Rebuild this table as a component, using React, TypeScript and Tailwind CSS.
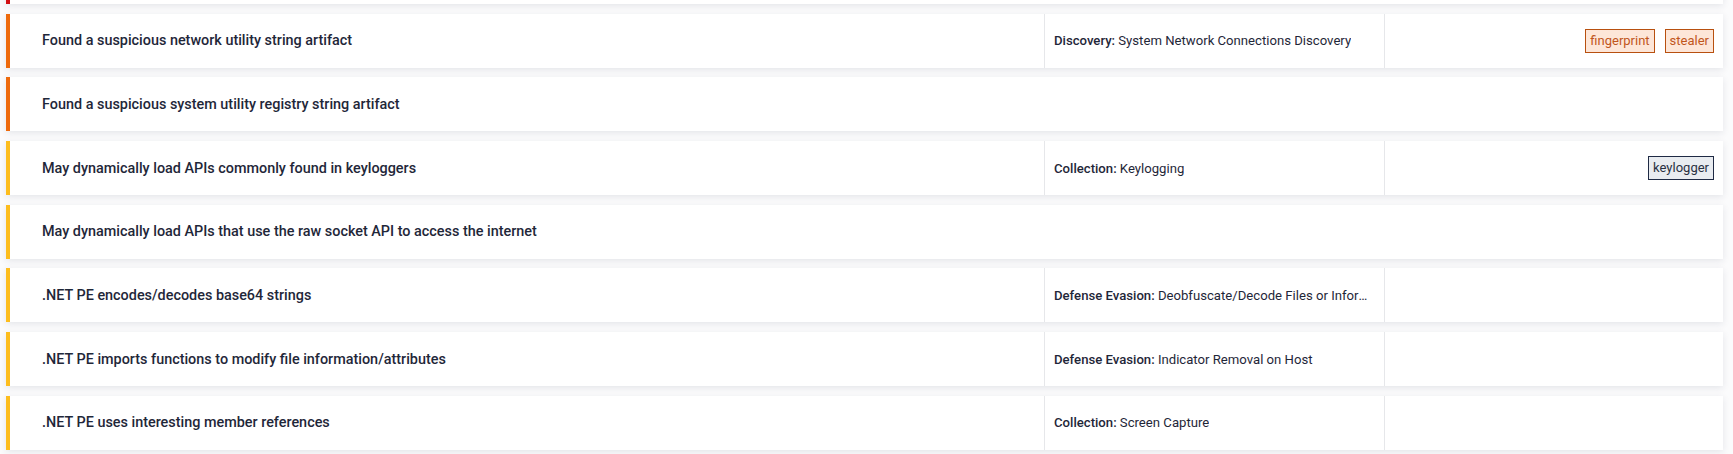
import React from "react";

type Row = {
  title: string;
  color: string;
  tactic?: { label: string; value: string };
  tags?: { text: string; kind: "orange" | "dark" }[];
  cols: boolean;
};

const rows: Row[] = [
  {
    title: "Found a suspicious network utility string artifact",
    color: "bg-[#ee6a0c]",
    tactic: { label: "Discovery:", value: "System Network Connections Discovery" },
    tags: [
      { text: "fingerprint", kind: "orange" },
      { text: "stealer", kind: "orange" },
    ],
    cols: true,
  },
  {
    title: "Found a suspicious system utility registry string artifact",
    color: "bg-[#ee6a0c]",
    cols: false,
  },
  {
    title: "May dynamically load APIs commonly found in keyloggers",
    color: "bg-[#fdbd1d]",
    tactic: { label: "Collection:", value: "Keylogging" },
    tags: [{ text: "keylogger", kind: "dark" }],
    cols: true,
  },
  {
    title: "May dynamically load APIs that use the raw socket API to access the internet",
    color: "bg-[#fdbd1d]",
    cols: false,
  },
  {
    title: ".NET PE encodes/decodes base64 strings",
    color: "bg-[#fdbd1d]",
    tactic: { label: "Defense Evasion:", value: "Deobfuscate/Decode Files or Information" },
    cols: true,
  },
  {
    title: ".NET PE imports functions to modify file information/attributes",
    color: "bg-[#fdbd1d]",
    tactic: { label: "Defense Evasion:", value: "Indicator Removal on Host" },
    cols: true,
  },
  {
    title: ".NET PE uses interesting member references",
    color: "bg-[#fdbd1d]",
    tactic: { label: "Collection:", value: "Screen Capture" },
    cols: true,
  },
];

function Tag({ text, kind }: { text: string; kind: "orange" | "dark" }) {
  const cls =
    kind === "orange"
      ? "border-[#b8500f] bg-[#fde6d8] text-[#c1561c]"
      : "border-[#1f2a44] bg-[#e9ecf0] text-[#2a3142]";
  return (
    <span className={`ml-[10px] inline-block border px-[4px] text-[13px] leading-[22px] ${cls}`}>
      {text}
    </span>
  );
}

function Card({ row }: { row: Row }) {
  return (
    <div className="flex h-[54px] shrink-0 bg-white shadow-[0_2px_7px_rgba(30,40,70,0.10)]">
      <div className={`w-[4px] shrink-0 ${row.color}`} />
      <div className="flex min-w-0 flex-1 items-center pl-[32px] pt-[1px] text-[14.4px] font-medium text-[#1f2739]">
        {row.title}
      </div>
      {row.cols && (
        <>
          <div className="flex w-[340px] shrink-0 items-center border-l border-[#e6e7ea] pl-[9px] pr-[13px] pt-[1px] text-[13.15px] text-[#1f2739]">
            <span className="truncate">
              <span className="font-medium">{row.tactic?.label}</span> {row.tactic?.value}
            </span>
          </div>
          <div className="flex w-[339px] shrink-0 items-center justify-end border-l border-[#e6e7ea] pr-[9px]">
            {row.tags?.map((t) => (
              <Tag key={t.text} text={t.text} kind={t.kind} />
            ))}
          </div>
        </>
      )}
    </div>
  );
}

export default function App() {
  return (
    <div
      className="h-[454px] w-[1733px] overflow-hidden bg-[#fbfbfc]"
      style={{ fontFamily: "Roboto, 'Noto Sans', sans-serif" }}
    >
      <div className="ml-[6px] mr-[10px] flex flex-col gap-[9.67px]">
        <div className="-mt-[50px] flex h-[54px] shrink-0 bg-white shadow-[0_2px_7px_rgba(30,40,70,0.10)]">
          <div className="w-[4px] shrink-0 bg-[#d20f12]" />
          <div className="flex-1" />
        </div>
        {rows.map((r) => (
          <Card key={r.title} row={r} />
        ))}
      </div>
    </div>
  );
}
